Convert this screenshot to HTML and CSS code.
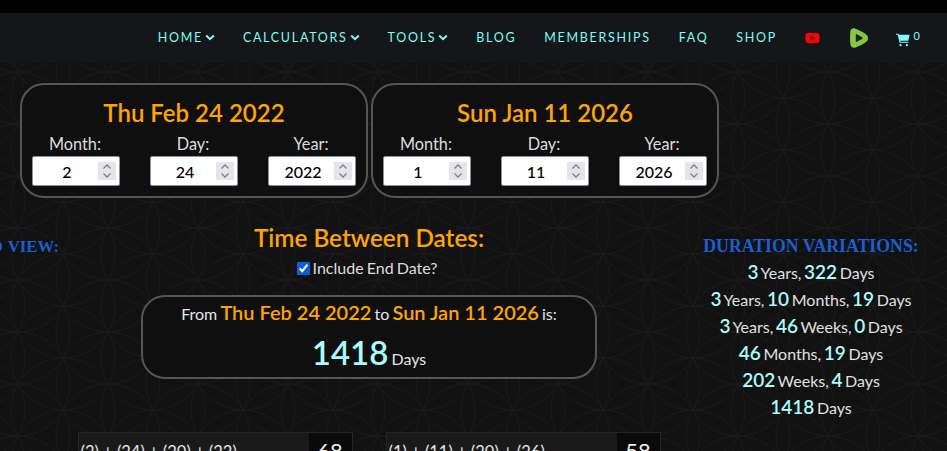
FILE: index.html
```html
<!DOCTYPE html>
<html lang="en">
<head>
<meta charset="utf-8">
<title>Time Between Dates</title>
<link rel="stylesheet" href="styles.css">
</head>
<body>
<div class="topbar"></div>
<nav class="nav">
  <a class="nav-link">HOME<svg class="chev" viewBox="0 0 10 7"><path d="M1.2 1.5 5 5.2 8.8 1.5" /></svg></a>
  <a class="nav-link">CALCULATORS<svg class="chev" viewBox="0 0 10 7"><path d="M1.2 1.5 5 5.2 8.8 1.5" /></svg></a>
  <a class="nav-link">TOOLS<svg class="chev" viewBox="0 0 10 7"><path d="M1.2 1.5 5 5.2 8.8 1.5" /></svg></a>
  <a class="nav-link">BLOG</a>
  <a class="nav-link">MEMBERSHIPS</a>
  <a class="nav-link">FAQ</a>
  <a class="nav-link">SHOP</a>
  <svg class="yt" viewBox="0 0 14 10"><rect x="0" y="0" width="14" height="10" rx="2.4" fill="#f00"/><path d="M5 3 9.500 5 5 7Z" fill="#111"/></svg>
  <svg class="rumble" viewBox="0 0 18 20"><path d="M3 .3C1.300.7.500 2 .3 4-.1 8-.1 12 .3 16c.3 3 2.700 4.300 5.300 3.500 3.800-1.300 7.500-3.200 10.700-5.700 2.300-1.800 2.300-5.400 0-7.200C13 4 9.300 2.100 5.500.7 4.500.3 3.800.2 3 .3Z" fill="#85c742"/><path d="M5.800 6.800v6.400c0 .6.500.9 1 .6l5.300-2.900c.6-.4.600-1.200 0-1.600L6.800 6.200c-.5-.3-1 0-1 .6Z" fill="#1c2418"/></svg>
  <span class="cart">
    <svg class="cart-icon" viewBox="0 0 15 14"><path d="M0 0h2.800l.5 1.200H15l-1.500 6.600H4.700l.3 1.200h8.500v1.100H3.900L1.900 1.100H0Z" fill="#7ffcf6"/><circle cx="5" cy="12.600" r="1.300" fill="#7ffcf6"/><circle cx="12" cy="12.600" r="1.300" fill="#7ffcf6"/></svg>
    <span class="cart-count">0</span>
  </span>
</nav>

<main class="page">
  <section class="dates">
    <div class="date-box">
      <h2 class="date-title">Thu Feb 24 2022</h2>
      <div class="fields">
        <label class="field"><span>Month:</span><span class="num"><input type="number" value="2"><svg class="spin" viewBox="0 0 18 18"><path d="M5.500 6.500 9 3l3.500 3.500M5.500 11.500 9 15l3.500-3.500"/></svg></span></label>
        <label class="field"><span>Day:</span><span class="num"><input type="number" value="24"><svg class="spin" viewBox="0 0 18 18"><path d="M5.500 6.500 9 3l3.500 3.500M5.500 11.500 9 15l3.500-3.500"/></svg></span></label>
        <label class="field"><span>Year:</span><span class="num"><input type="number" value="2022"><svg class="spin" viewBox="0 0 18 18"><path d="M5.500 6.500 9 3l3.500 3.500M5.500 11.500 9 15l3.500-3.500"/></svg></span></label>
      </div>
    </div>
    <div class="date-box">
      <h2 class="date-title">Sun Jan 11 2026</h2>
      <div class="fields">
        <label class="field"><span>Month:</span><span class="num"><input type="number" value="1"><svg class="spin" viewBox="0 0 18 18"><path d="M5.500 6.500 9 3l3.500 3.500M5.500 11.500 9 15l3.500-3.500"/></svg></span></label>
        <label class="field"><span>Day:</span><span class="num"><input type="number" value="11"><svg class="spin" viewBox="0 0 18 18"><path d="M5.500 6.500 9 3l3.500 3.500M5.500 11.500 9 15l3.500-3.500"/></svg></span></label>
        <label class="field"><span>Year:</span><span class="num"><input type="number" value="2026"><svg class="spin" viewBox="0 0 18 18"><path d="M5.500 6.500 9 3l3.500 3.500M5.500 11.500 9 15l3.500-3.500"/></svg></span></label>
      </div>
    </div>
  </section>

  <section class="columns">
    <aside class="left-col"><h3 class="side-title side-title-clipped">DATES TO VIEW:</h3></aside>
    <div class="center-col">
      <h2 class="between-title">Time Between Dates:</h2>
      <label class="end-date"><input type="checkbox" checked><span>Include End Date?</span></label>
      <div class="result-box">
        <p class="result-line">From <b>Thu Feb 24 2022</b> to <b>Sun Jan 11 2026</b> is:</p>
        <p class="result-total"><strong>1418</strong> Days</p>
      </div>
      <div class="sums">
        <div class="sum"><span class="sum-text">(2) + (24) + (20) + (22)</span><span class="sum-value">68</span></div>
        <div class="sum"><span class="sum-text">(1) + (11) + (20) + (26)</span><span class="sum-value">58</span></div>
      </div>
    </div>
    <aside class="right-col">
      <h3 class="side-title">DURATION VARIATIONS:</h3>
      <div class="variations">
        <p class="variation"><b>3</b> Years, <b>322</b> Days</p>
        <p class="variation"><b>3</b> Years, <b>10</b> Months, <b>19</b> Days</p>
        <p class="variation"><b>3</b> Years, <b>46</b> Weeks, <b>0</b> Days</p>
        <p class="variation"><b>46</b> Months, <b>19</b> Days</p>
        <p class="variation"><b>202</b> Weeks, <b>4</b> Days</p>
        <p class="variation"><b>1418</b> Days</p>
      </div>
    </aside>
  </section>
</main>
</body>
</html>
```

FILE: styles.css
```css
* { box-sizing: border-box; }

html, body { height: 451px; overflow: hidden; }

body {
  margin: 0;
  font-family: "Lato", sans-serif;
  color: #e6e6e6;
  background-color: #111112;
  background-image: url("data:image/svg+xml,%3Csvg xmlns='http://www.w3.org/2000/svg' width='90' height='52' fill='none' stroke='%23191919' stroke-width='1'%3E%3Ccircle cx='0' cy='-52' r='52'/%3E%3Ccircle cx='0' cy='0' r='52'/%3E%3Ccircle cx='0' cy='52' r='52'/%3E%3Ccircle cx='0' cy='104' r='52'/%3E%3Ccircle cx='90' cy='-52' r='52'/%3E%3Ccircle cx='90' cy='0' r='52'/%3E%3Ccircle cx='90' cy='52' r='52'/%3E%3Ccircle cx='90' cy='104' r='52'/%3E%3Ccircle cx='45' cy='-26' r='52'/%3E%3Ccircle cx='45' cy='26' r='52'/%3E%3Ccircle cx='45' cy='78' r='52'/%3E%3Ccircle cx='-45' cy='-26' r='52'/%3E%3Ccircle cx='-45' cy='26' r='52'/%3E%3Ccircle cx='-45' cy='78' r='52'/%3E%3Ccircle cx='135' cy='-26' r='52'/%3E%3Ccircle cx='135' cy='26' r='52'/%3E%3Ccircle cx='135' cy='78' r='52'/%3E%3C/svg%3E");
  background-position: 63px 46px;
}

.topbar { height: 13px; background: #000; }

.nav {
  height: 50px;
  display: flex;
  align-items: center;
  justify-content: flex-end;
  padding-right: 27px;
  background: #15161a;
}

.nav-link {
  display: flex;
  align-items: center;
  margin-right: 28px;
  margin-top: -2px;
  font-family: "Lato", sans-serif;
  font-weight: 400;
  font-size: 12.500px;
  letter-spacing: 1.700px;
  color: #7ffcf6;
}

.chev { width: 10px; height: 7px; margin-left: 2px; fill: none; stroke: #7ffcf6; stroke-width: 2; }
.yt { width: 15px; height: 10px; margin-right: 30px; margin-top: -1px; }
.rumble { width: 18px; height: 20px; margin-right: 28px; }

.cart { display: flex; width: 24px; align-items: flex-start; color: #7ffcf6; }
.cart-icon { width: 15px; height: 14px; margin-top: 3px; }
.cart-count { margin-left: 4px; font-size: 11px; font-weight: 400; line-height: 11px; }

.page { padding-top: 20px; }

.dates { display: flex; gap: 3px; padding-left: 20px; }

.date-box {
  width: 348px;
  height: 115px;
  padding: 0 10px;
  background: #0f0f10;
  border: 2px solid #555;
  border-radius: 24px;
}

.date-title {
  margin: 13px 0 0;
  text-align: center;
  font-size: 24px;
  line-height: 30px;
  font-weight: 600;
  color: #ffa500;
}

.fields { display: flex; justify-content: space-between; margin-top: 7px; }

.field { display: flex; flex-direction: column; align-items: center; width: 88px; font-size: 16.300px; line-height: 18px; color: #ddd; }
.field > span:first-child { margin-bottom: 3px; margin-right: 2px; }

.num {
  display: flex;
  align-items: center;
  width: 88px;
  height: 30px;
  padding-right: 3px;
  background: #fff;
  border: 1px solid #8d8da3;
  border-radius: 2px;
}

.num input {
  flex: 1;
  min-width: 0;
  height: 100%;
  padding: 0 0 0 3px;
  text-align: center;
  font-family: "Lato", sans-serif;
  font-weight: 500;
  font-size: 16px;
  color: #000;
  background: transparent;
  border: 0;
  outline: none;
  appearance: textfield;
}

.num input::-webkit-inner-spin-button,
.num input::-webkit-outer-spin-button { appearance: none; margin: 0; }

.spin { flex: none; width: 18px; height: 18px; background: #e4e4ea; fill: none; stroke: #808085; stroke-width: 1.300; }

.columns { display: flex; align-items: flex-start; }

.left-col { display: flex; justify-content: flex-end; width: 59px; white-space: nowrap; padding-top: 39px; }

.side-title {
  margin: 0;
  font-family: "Liberation Serif", serif;
  font-weight: 700;
  font-size: 17.800px;
  line-height: 19px;
  color: #1a5fcf;
}

.side-title-clipped { font-size: 16.800px; word-spacing: 1px; }

.center-col { width: 620px; display: flex; flex-direction: column; align-items: center; padding-top: 25px; }

.between-title { margin: 0; font-size: 24.300px; line-height: 30px; font-weight: 600; color: #ffa500; }

.end-date { display: flex; align-items: center; margin: 6px 4px 0 0; font-size: 16px; line-height: 18px; color: #ddd; word-spacing: -1px; }
.end-date input { width: 13px; height: 13px; margin: 0 3px 0 0; accent-color: #0b5ed7; }

.result-box {
  width: 456px;
  height: 84px;
  margin-top: 18px;
  text-align: center;
  background: #0f0f10;
  border: 2px solid #555;
  border-radius: 24px;
}

.result-line { margin: 2px 0 0; font-size: 16px; line-height: 26px; color: #e6e6e6; word-spacing: -1px; }
.result-line b { font-size: 20px; font-weight: 600; color: #ffa500; word-spacing: 0; }
.result-total { margin: 5px 0 0; font-size: 16px; line-height: 40px; word-spacing: -1px; }
.result-total strong { font-size: 33px; font-weight: 600; color: #aafcfc; }

.sums { display: flex; gap: 33px; margin-top: 53px; }

.sum { display: flex; width: 275px; height: 40px; background: #1a1a1b; border: 1px solid #252526; }
.sum-text { flex: 1; padding: 7px 2px; font-size: 16.500px; line-height: 24px; color: #e6e6e6; white-space: nowrap; }
.sum-value { width: 43px; padding-top: 5px; text-align: center; font-size: 22px; line-height: 26px; color: #eee; background: #0a0a0a; }

.right-col { width: 264px; padding-top: 39px; text-align: center; }

.variations { padding-top: 3px; }
.variation { height: 27px; margin: 0; font-size: 16px; line-height: 27px; color: #e0e0e0; word-spacing: -1.500px; }
.variation b { font-size: 19px; line-height: 1; font-weight: 600; color: #aafcfc; }
```
